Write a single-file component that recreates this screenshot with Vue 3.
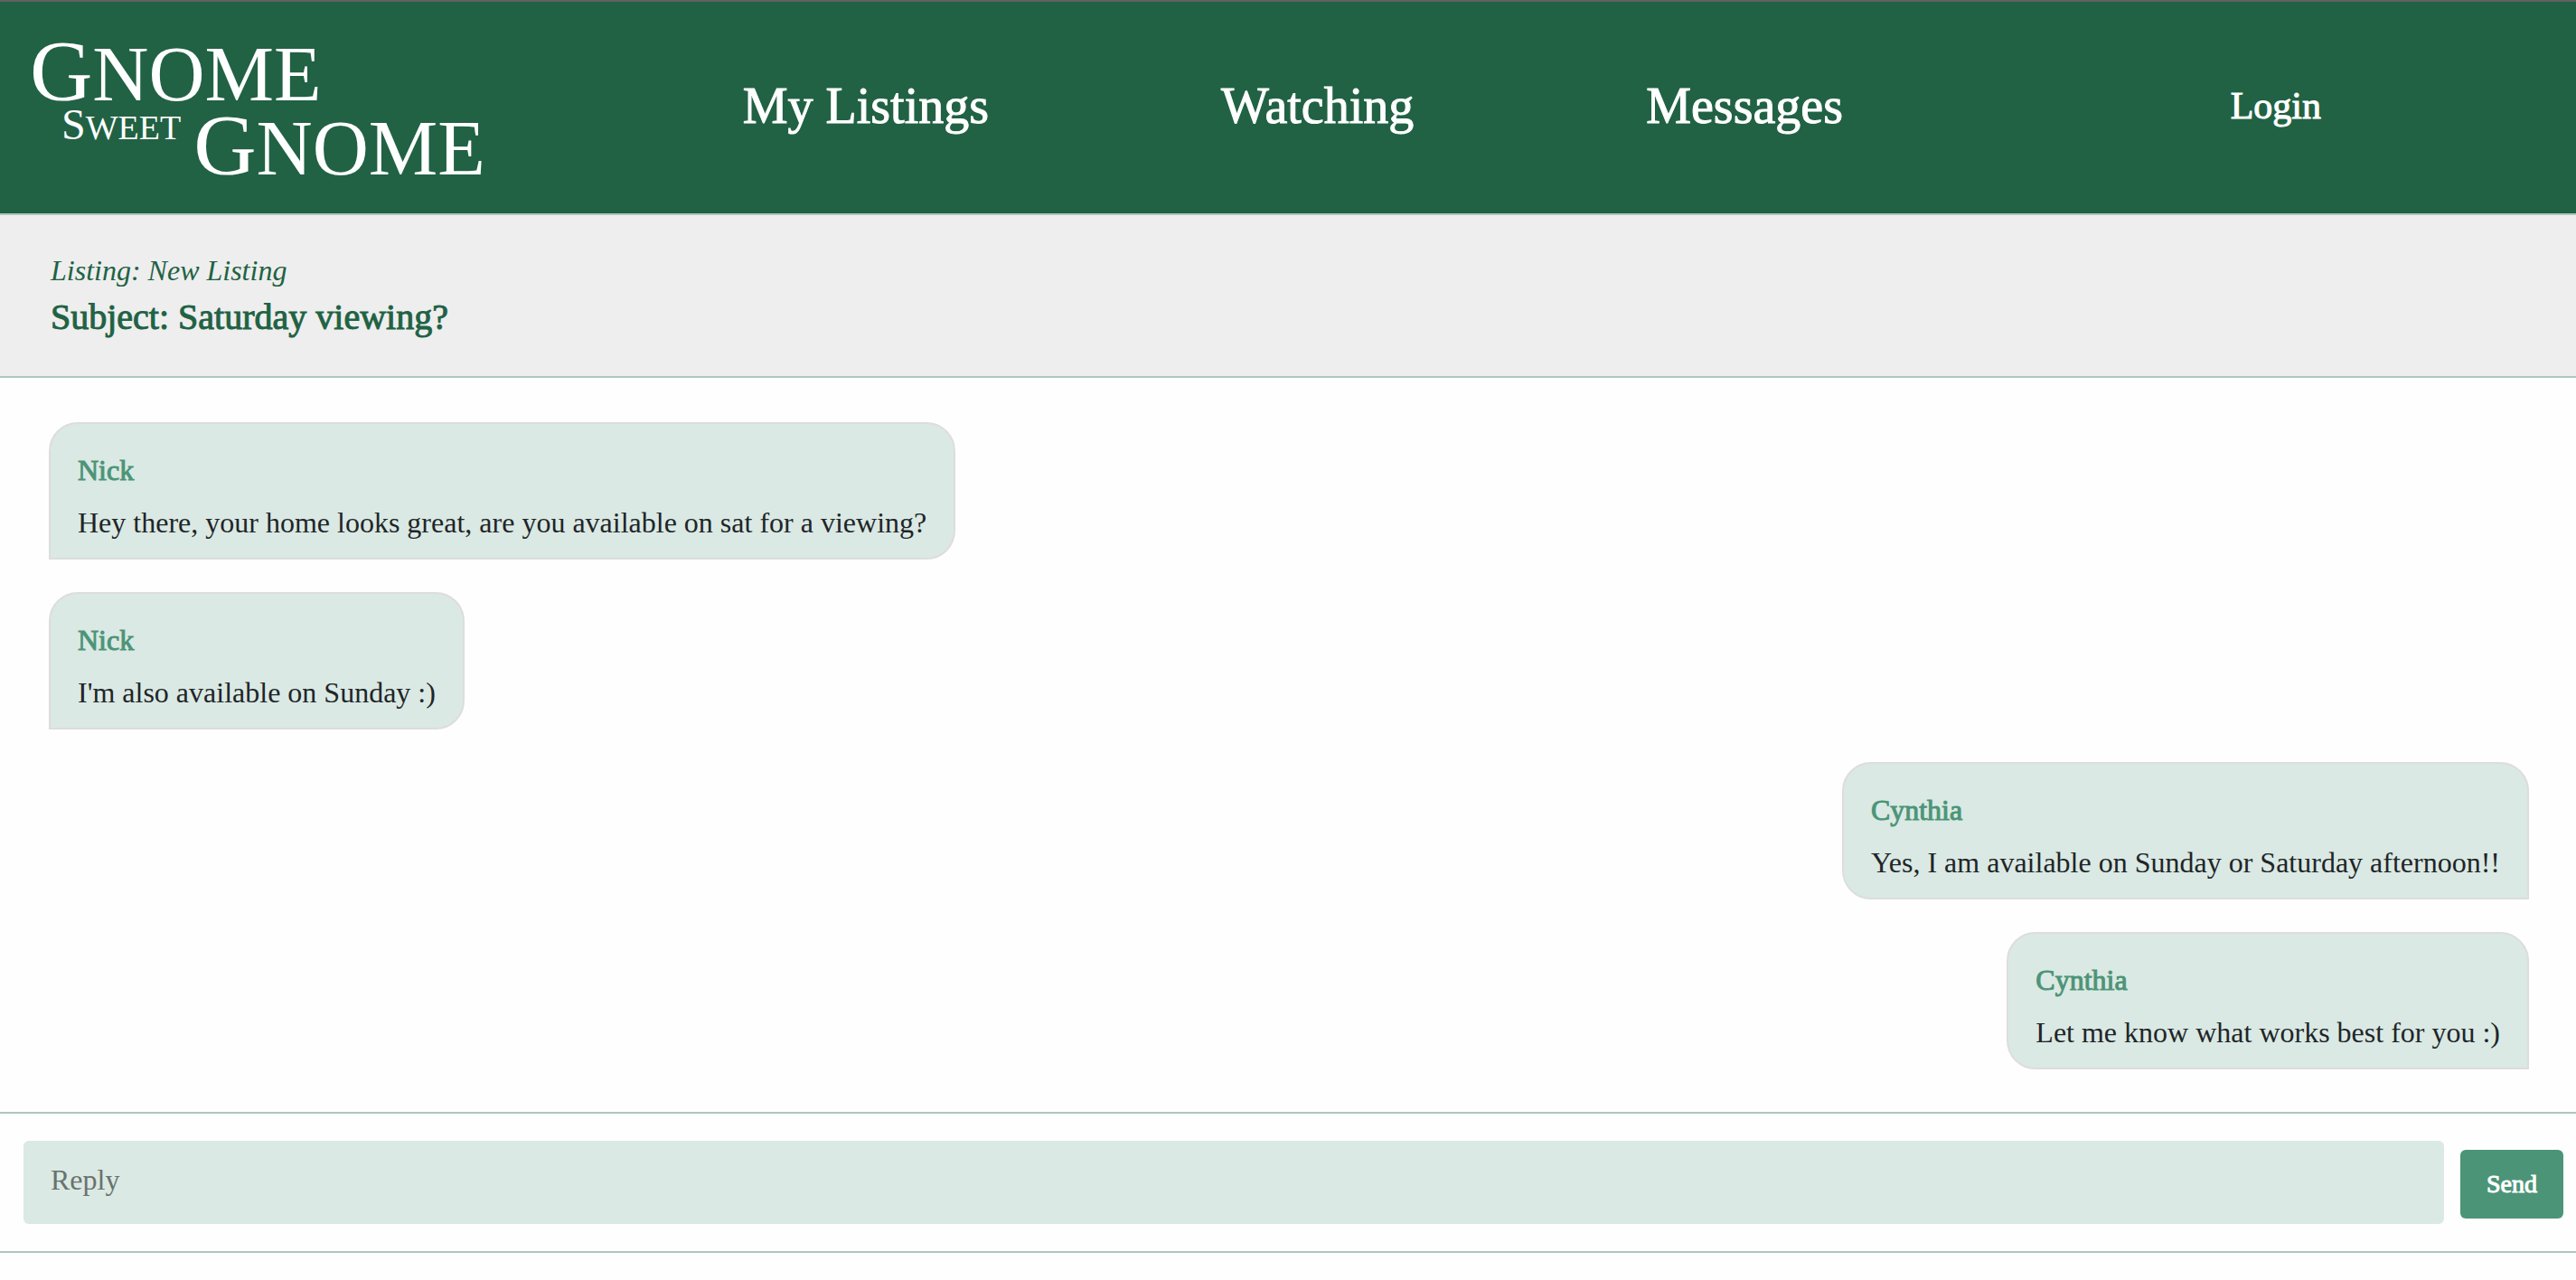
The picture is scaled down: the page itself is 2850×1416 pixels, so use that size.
<script setup>
import { ref } from 'vue'

const links = ['My Listings', 'Watching', 'Messages']
const messages = [
  { author: 'Nick', text: 'Hey there, your home looks great, are you available on sat for a viewing?', mine: false },
  { author: 'Nick', text: "I'm also available on Sunday :)", mine: false },
  { author: 'Cynthia', text: 'Yes, I am available on Sunday or Saturday afternoon!!', mine: true },
  { author: 'Cynthia', text: 'Let me know what works best for you :)', mine: true },
]
const reply = ref('')
</script>

<template>
  <div class="page">
    <header class="topbar">
      <a class="logo" href="#">
        <span class="logo-row"><span class="logo-big">Gnome</span></span>
        <span class="logo-row second">
          <span class="logo-small">Sweet</span>
          <span class="logo-big">Gnome</span>
        </span>
      </a>
      <nav class="nav">
        <a v-for="link in links" :key="link" href="#">{{ link }}</a>
      </nav>
      <a class="login" href="#">Login</a>
    </header>

    <section class="subject-bar">
      <p class="listing">Listing: New Listing</p>
      <h1 class="subject">Subject: Saturday viewing?</h1>
    </section>

    <main class="messages">
      <article v-for="(m, i) in messages" :key="i" class="bubble" :class="{ mine: m.mine }">
        <h2 class="author">{{ m.author }}</h2>
        <p class="text">{{ m.text }}</p>
      </article>
    </main>

    <form class="reply" @submit.prevent>
      <textarea v-model="reply" class="field" rows="1" placeholder="Reply" aria-label="Reply"></textarea>
      <button class="send" type="submit">Send</button>
    </form>
  </div>
</template>

<style>
body {
  margin: 0;
  background: #fefefe;
}
</style>

<style scoped>
.page {
  font-family: "Liberation Serif", "Times New Roman", serif;
  font-size: 32px;
  line-height: 48px;
  color: #212529;
}

.page * {
  box-sizing: border-box;
}

h1,
h2,
p {
  margin: 0;
  font-weight: 400;
}

a {
  color: #fff;
  text-decoration: none;
}

.topbar {
  display: grid;
  grid-template-columns: 32% 1fr auto;
  align-items: center;
  padding-right: 282px;
  background: #216244;
  border-top: 2px solid #5f6064;
  border-bottom: 2px solid #adc8bc;
}

.logo {
  display: flex;
  flex-direction: column;
  padding: 39px 0 31px 33px;
  text-transform: uppercase;
}

.logo-row {
  display: flex;
  align-items: flex-start;
}

.logo-row.second {
  gap: 14px;
  padding-left: 35px;
}

.logo-big {
  display: block;
  font-size: 86px;
  line-height: 82px;
}

.logo-big::first-letter {
  font-size: 96px;
  line-height: 0;
}

.logo-small {
  display: block;
  font-size: 38px;
  line-height: 36px;
}

.logo-small::first-letter {
  font-size: 48px;
  line-height: 0;
}

.nav {
  display: flex;
  gap: 257px;
  padding-bottom: 4px;
  font-size: 56px;
  line-height: 64px;
  white-space: nowrap;
  -webkit-text-stroke: 1px currentColor;
}

.login {
  padding-bottom: 4px;
  font-size: 42px;
  -webkit-text-stroke: 1px currentColor;
}

.subject-bar {
  padding: 37px 56px;
  color: #216244;
  background: #eee;
  border-bottom: 2px solid #adc8bc;
}

.listing {
  font-style: italic;
}

.subject {
  font-size: 40px;
  line-height: 56px;
  -webkit-text-stroke: 1px currentColor;
}

.messages {
  display: flex;
  flex-direction: column;
  align-items: flex-start;
  gap: 36px;
  padding: 49px 52px 47px 54px;
}

.bubble {
  display: flex;
  flex-direction: column;
  gap: 10px;
  padding: 27px 30px 15px;
  background: #dae9e3;
  border: 2px solid #ddd;
  border-radius: 32px 32px 32px 0;
}

.bubble.mine {
  align-self: flex-end;
  border-radius: 32px 32px 0 32px;
}

.author {
  font-size: 32px;
  color: #4c9478;
  -webkit-text-stroke: 1px currentColor;
}

.reply {
  display: flex;
  align-items: center;
  gap: 18px;
  padding: 30px 14px 30px 26px;
  border-top: 2px solid #adc8bc;
  border-bottom: 2px solid #adc8bc;
}

.field {
  flex: 1;
  height: 92px;
  padding: 19px 30px;
  font: inherit;
  color: inherit;
  background: #dae9e3;
  border: 0;
  border-radius: 6px;
  resize: none;
}

.field::placeholder {
  color: #69726e;
  opacity: 1;
}

.send {
  width: 114px;
  height: 76px;
  margin-top: 4px;
  padding: 0;
  font-family: inherit;
  font-size: 28px;
  color: #fff;
  background: #4c9478;
  border: 0;
  border-radius: 6px;
  -webkit-text-stroke: 1px currentColor;
}
</style>
